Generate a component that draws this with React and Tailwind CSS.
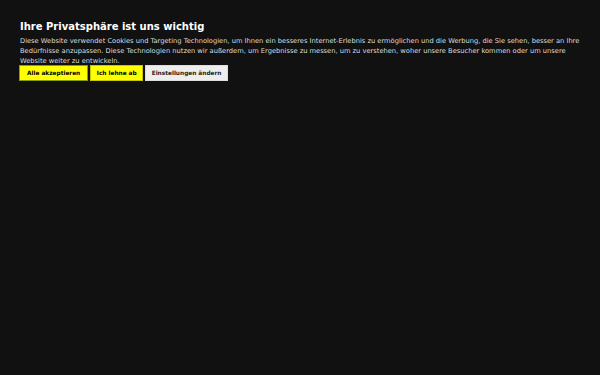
export default function App() {
	return (
		<div
			className="w-[600px] h-[375px] bg-[#111111] text-white"
			style={{ fontFamily: '"DejaVu Sans", sans-serif' }}
		>
			<div className="px-5 pt-[19px]">
				<h2 className="text-[10px] font-bold leading-[16px]">
					Ihre Privatsphäre ist uns wichtig
				</h2>
				<p className="text-[6.7px] leading-[10px] text-[#dddddd] mt-[1px]">
					Diese Website verwendet Cookies und Targeting Technologien, um Ihnen
					ein besseres Internet-Erlebnis zu ermöglichen und die Werbung, die Sie
					sehen, besser an Ihre Bedürfnisse anzupassen. Diese Technologien
					nutzen wir außerdem, um Ergebnisse zu messen, um zu verstehen, woher
					unsere Besucher kommen oder um unsere Website weiter zu entwickeln.
				</p>
				<div className="flex gap-[2px] -mt-[1px] -ml-[1px]">
					<button className="h-[16px] px-[7px] bg-[#ffff00] border border-[#8a9a1a] text-black text-[5.8px] font-bold">
						Alle akzeptieren
					</button>
					<button className="h-[16px] px-[5.5px] bg-[#ffff00] border border-[#c8c800] text-black text-[5.8px] font-bold">
						Ich lehne ab
					</button>
					<button className="h-[16px] px-[5.5px] bg-[#eeeeee] border border-[#dddddd] text-[#222222] text-[5.8px] font-bold">
						Einstellungen ändern
					</button>
				</div>
			</div>
		</div>
	);
}
